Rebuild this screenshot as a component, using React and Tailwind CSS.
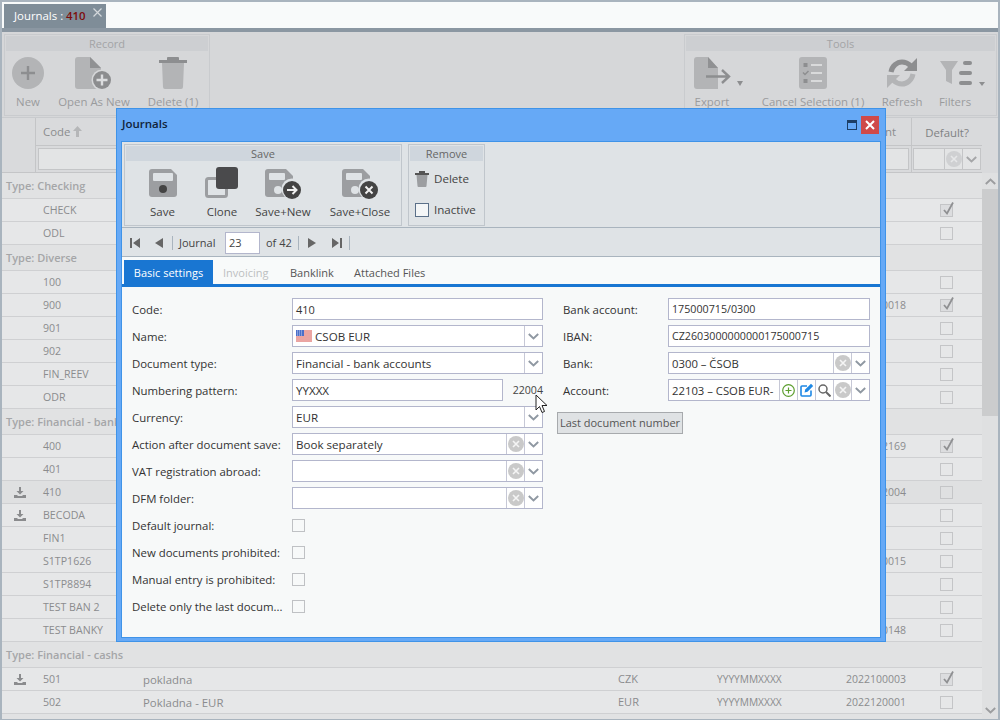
import React from "react";

const F = { fontFamily: '"Open Sans", "Noto Sans", sans-serif' };

function Chevron({ c = "#8f98a2", up }) {
  return (
    <svg width="11" height="7" viewBox="0 0 11 7" className={up ? "rotate-180" : ""}>
      <path d="M0.800 1l4.700 4.500L10.200 1" fill="none" stroke={c} strokeWidth="1.900" />
    </svg>
  );
}
function Clear({ bg = "#c9c9c9", fg = "#f4f4f4" }) {
  return (
    <svg width="16" height="16" viewBox="0 0 16 16">
      <circle cx="8" cy="8" r="8" fill={bg} />
      <path d="M5 5l6 6M11 5l-6 6" stroke={fg} strokeWidth="1.600" />
    </svg>
  );
}
function Check() {
  return (
    <span className="relative block w-[13px] h-[13px] border border-[#c4c5c7] bg-[#dcdddf]">
      <svg className="absolute left-[1px] -top-[4px]" width="14" height="16" viewBox="0 0 14 16">
        <path d="M2 9l3 3.500L11 1.500" fill="none" stroke="#8f9092" strokeWidth="1.800" />
      </svg>
    </span>
  );
}
function Box({ light }) {
  return <span className={"block w-[13px] h-[13px] border " + (light ? "border-[#bfc1c4] bg-[#f7f9f9]" : "border-[#c4c5c7]")} />;
}
function DlIcon() {
  return (
    <svg width="12" height="11" viewBox="0 0 12 11">
      <path d="M5 0h2v4h2.500L6 7.500 2.500 4H5z" fill="#8a8b8d" />
      <path d="M0 8h3l1 1h4l1-1h3v3H0z" fill="#8a8b8d" />
    </svg>
  );
}

const rows = [
  ["g", "Type: Checking"],
  ["r", "CHECK", "", "", "", "", true],
  ["r", "ODL", "", "", "", "", false],
  ["g", "Type: Diverse"],
  ["r", "100", "", "", "", "", false],
  ["r", "900", "", "", "", "2022100018", true],
  ["r", "901", "", "", "", "", false],
  ["r", "902", "", "", "", "", false],
  ["r", "FIN_REEV", "", "", "", "", false],
  ["r", "ODR", "", "", "", "", false],
  ["g", "Type: Financial - bank accounts"],
  ["r", "400", "", "", "", "2022102169", true],
  ["r", "401", "", "", "", "", false],
  ["r", "410", "", "", "", "2022122004", false, true, true],
  ["r", "BECODA", "", "", "", "", false, true],
  ["r", "FIN1", "", "", "", "", false],
  ["r", "S1TP1626", "", "", "", "2022100015", false],
  ["r", "S1TP8894", "", "", "", "", false],
  ["r", "TEST BAN 2", "", "", "", "", false],
  ["r", "TEST BANKY", "", "", "", "2022100148", false],
  ["g", "Type: Financial - cashs"],
  ["r", "501", "pokladna", "CZK", "YYYYMMXXXX", "2022100003", true, true],
  ["r", "502", "Pokladna - EUR", "EUR", "YYYYMMXXXX", "2022120001", false],
];

function GridRow({ r }) {
  if (r[0] === "g") {
    return (
      <div className="h-[26px] pl-[4px] pt-[2px] flex items-center border-b border-[#cfd0d2] bg-[#e1e2e3] text-[11px] font-semibold text-[#a5a6a8]">
        {r[1]}
      </div>
    );
  }
  const [, code, name, cur, pat, num, chk, dl, sel] = r;
  return (
    <div className={"h-[23px] flex items-center border-b border-[#cfd0d2] text-[#8b8c8e] " + (sel ? "bg-[#dfe0e1]" : "bg-[#e6e7e8]")}>
      <span className="w-[34px] flex justify-center pl-[2px]">{dl && <DlIcon />}</span>
      <span className="w-[107px] pl-[7px] text-[10.6px] pt-px">{code}</span>
      <span className="w-[475px] text-[11.4px] pt-px">{name}</span>
      <span className="w-[99px] text-[11px] pt-px">{cur}</span>
      <span className="w-[129px] text-[10.2px] pt-px">{pat}</span>
      <span className="w-[65px] text-[10.5px] pt-px whitespace-nowrap">{num}</span>
      <span className="w-[71px] flex justify-center">{chk ? <Check /> : <Box />}</span>
    </div>
  );
}

function BgBtn({ w, label, icon = "", children }) {
  return (
    <div className={"flex flex-col items-center " + w}>
      <div className={"h-[32px] flex items-center justify-center " + icon}>{children}</div>
      <span className="mt-[4px] text-[11.4px] leading-[18px] text-[#9a9b9d] whitespace-nowrap">{label}</span>
    </div>
  );
}

function GroupHead({ children, cls }) {
  return <div className={"h-[15px] leading-[15px] text-center text-[11px] " + cls}>{children}</div>;
}

function MBtn({ w, label, children }) {
  return (
    <div className={"flex flex-col items-center " + w}>
      <div className="h-[32px] w-full flex items-end justify-center">{children}</div>
      <span className="mt-[5px] text-[11.5px] leading-[16px] text-[#444] whitespace-nowrap">{label}</span>
    </div>
  );
}

function Disk({ children }) {
  return (
    <svg width="36" height="30" viewBox="0 0 36 30">
      <path d="M3 0h18l7 7v18a3 3 0 0 1-3 3H3a3 3 0 0 1-3-3V3a3 3 0 0 1 3-3z" fill="#9c9ea1" />
      <rect x="4" y="4" width="16" height="7" rx="1" fill="#dfe3e6" />
      <circle cx="13" cy="21" r="4" fill="#dfe3e6" />
      {children}
    </svg>
  );
}

function Field({ children, cls = "" }) {
  return (
    <div className={"h-[22px] flex items-stretch border border-[#b3b6cc] bg-white text-[#333] " + cls}>{children}</div>
  );
}
function Txt({ children, s = "text-[11.6px]" }) {
  return <span className={"flex-1 min-w-0 pl-[3px] leading-[21px] whitespace-nowrap overflow-hidden " + s}>{children}</span>;
}
function Btn({ children }) {
  return <span className="w-[18px] shrink-0 border-l border-[#c6c8d6] flex items-center justify-center">{children}</span>;
}
function Label({ children }) {
  return <span className="h-[22px] leading-[23px] whitespace-nowrap text-[11.4px] text-[#333]">{children}</span>;
}

function Flag() {
  return (
    <svg className="mr-[3px] shrink-0" width="16" height="12" viewBox="0 0 16 12">
      <rect width="16" height="12" fill="#f5f5f5" />
      <path d="M0 1h16M0 3h16M0 5h16M0 7h16M0 9h16M0 11h16" stroke="#e0544f" strokeWidth="1" />
      <rect width="8" height="6" fill="#4b6fc9" />
      <path d="M1 1h6M1 3h6M1 5h6" stroke="#dfe6f8" strokeWidth="0.800" strokeDasharray="1 1" />
    </svg>
  );
}

export default function App() {
  return (
    <div style={F} className="relative w-[1000px] h-[720px] overflow-hidden border-2 border-b-[1px] border-[#a9b4be] bg-[#d6d7d9] flex flex-col">
      {/* tab strip */}
      <div className="h-[30px] shrink-0 bg-[#f8fafa] border-b-[4px] border-[#8b97a2] pl-[2px] pt-[2px] flex">
        <div className="relative w-[102px] h-[24px] bg-[#7f8d98] pl-[10px] leading-[23px] text-[11.4px] text-white whitespace-nowrap">
          Journals : <span className="font-semibold text-[#7d0c0c]">410</span>
          <svg className="absolute right-[4px] top-[4px]" width="9" height="9" viewBox="0 0 9 9">
            <path d="M0.500 0.500l8 8M8.500 0.500l-8 8" stroke="#d4d8dc" strokeWidth="1.200" />
          </svg>
        </div>
      </div>

      {/* background toolbars */}
      <div className="h-[86px] shrink-0 flex justify-between pt-[2px] pl-[2px] pr-[1px] border-b border-[#c9cbce]">
        <div className="w-[206px] h-[82px] border border-[#c9cbce] p-px">
          <GroupHead cls="bg-[#cdcfd2] text-[#a3a4a6]">Record</GroupHead>
          <div className="flex pt-[6px]">
            <BgBtn w="w-[44px]" label="New">
              <svg width="32" height="32" viewBox="0 0 32 32">
                <circle cx="16" cy="16" r="16" fill="#b3b4b6" />
                <path d="M16 9v14M9 16h14" stroke="#8d8e90" strokeWidth="2.400" />
              </svg>
            </BgBtn>
            <BgBtn w="w-[88px]" label="Open As New">
              <svg width="38" height="32" viewBox="0 0 38 32">
                <path d="M3 0h11l1 0 11 11v21H3a3 3 0 0 1-3-3V3a3 3 0 0 1 3-3z" fill="#b3b4b6" />
                <path d="M15 0l11 11H15z" fill="#909193" />
                <circle cx="27" cy="23" r="10.500" fill="#d6d7d9" />
                <circle cx="27" cy="23" r="9" fill="#8c8d8f" />
                <path d="M27 17.500v11M21.500 23h11" stroke="#dcdddf" strokeWidth="2.400" />
              </svg>
            </BgBtn>
            <BgBtn w="w-[70px]" label="Delete (1)">
              <svg width="28" height="32" viewBox="0 0 28 32">
                <path d="M0 3h28v3H0zM8 1c0-.500.500-1 1-1h10c.500 0 1 .500 1 1v2H8z" fill="#8d8e90" />
                <path d="M3 6h22l-1 24a2 2 0 0 1-2 2H6a2 2 0 0 1-2-2z" fill="#b3b4b6" />
              </svg>
            </BgBtn>
          </div>
        </div>
        <div className="w-[313px] h-[82px] border border-[#c9cbce] p-px">
          <GroupHead cls="bg-[#cdcfd2] text-[#a3a4a6]">Tools</GroupHead>
          <div className="flex pt-[6px]">
            <BgBtn w="w-[52px]" icon="pl-[13px]" label="Export">
              <svg width="49" height="32" viewBox="0 0 49 32" className="shrink-0">
                <path d="M3 0h11l10 11v21H3a3 3 0 0 1-3-3V3a3 3 0 0 1 3-3z" fill="#b3b4b6" />
                <path d="M14 0l10 11H14z" fill="#909193" />
                <path d="M12 19.500h23M28 13l7 6.500-7 6.500" fill="none" stroke="#8d8e90" strokeWidth="2.400" />
                <path d="M43 24h6l-3 5z" fill="#8d8e90" />
              </svg>
            </BgBtn>
            <BgBtn w="w-[150px]" label="Cancel Selection (1)">
              <svg width="28" height="32" viewBox="0 0 28 32">
                <rect width="28" height="32" rx="3" fill="#b3b4b6" />
                <path d="M12 8h11M12 16h11M12 24h11" stroke="#d9dadb" strokeWidth="2" />
                <rect x="4.500" y="6" width="4" height="4" fill="#8d8e90" />
                <path d="M4 15.500l2 2 3.500-3.500" fill="none" stroke="#8d8e90" strokeWidth="1.500" />
                <rect x="4.500" y="22" width="4" height="4" fill="#8d8e90" />
              </svg>
            </BgBtn>
            <BgBtn w="w-[28px]" label="Refresh">
              <svg width="32" height="32" viewBox="0 0 32 32" className="shrink-0">
                <path d="M27 17C26 23 21 27 16 27C12 27 9 25 7 23" fill="none" stroke="#b3b4b6" strokeWidth="5" />
                <path d="M1 31V18H14z" fill="#b3b4b6" />
                <path d="M5 15C6 9 11 5 16 5C20 5 23 7 25 9" fill="none" stroke="#8d8e90" strokeWidth="5" />
                <path d="M31 1V14H18z" fill="#8d8e90" />
              </svg>
            </BgBtn>
            <BgBtn w="w-[78px]" icon="pl-[15px]" label="Filters">
              <svg width="45" height="32" viewBox="0 0 45 32" className="shrink-0">
                <path d="M0 4h18l-6 9v14l-6-3V13z" fill="#b3b4b6" />
                <rect x="23" y="4" width="9" height="4" rx="2" fill="#8d8e90" />
                <rect x="19" y="14" width="13" height="4" rx="2" fill="#8d8e90" />
                <rect x="19" y="24" width="13" height="4" rx="2" fill="#8d8e90" />
                <path d="M39 25h6l-3 4z" fill="#8d8e90" />
              </svg>
            </BgBtn>
          </div>
        </div>
      </div>

      {/* background grid */}
      <div className="flex-1 min-h-0 flex flex-col bg-[#e1e2e3]">
        <div className="h-[55px] shrink-0 flex text-[11.4px] text-[#8b8c8e] bg-[#d9dadc]">
          <div className="w-[34px] border-r border-b border-[#c4c5c7]" />
          <div className="w-[946px] flex flex-col border-b border-[#c4c5c7]">
            <div className="h-[28px] flex border-b border-[#c4c5c7]">
              <span className="w-[875px] pl-[7px] flex items-center gap-[3px] leading-[30px]">
                Code
                <svg width="9" height="11" viewBox="0 0 9 11"><path d="M4.500 0L9 5H6v6H3V5H0z" fill="#b5b6b8" /></svg>
                <span className="ml-auto pr-[15px]">Last Document</span>
              </span>
              <span className="w-[71px] border-l border-[#c4c5c7] text-center leading-[30px] text-[#808183]">Default?</span>
            </div>
            <div className="flex-1 flex items-start">
              <div className="w-[875px] px-[2px] pt-[2px]">
                <span className="block w-[871px] h-[22px] border border-[#c4c5c7] bg-[#e3e4e5]" />
              </div>
              <div className="w-[71px] h-full border-l border-[#c4c5c7] pl-px pt-[2px]">
                <span className="w-[68px] h-[22px] border border-[#c4c5c7] bg-[#e3e4e5] flex justify-end">
                  <span className="w-[18px] border-l border-[#c4c5c7] flex items-center justify-center"><Clear bg="#cfd0d2" fg="#e6e7e8" /></span>
                  <span className="w-[18px] border-l border-[#c4c5c7] flex items-center justify-center"><Chevron c="#a5a6a8" /></span>
                </span>
              </div>
            </div>
          </div>
          <div className="w-[16px]" />
        </div>
        <div className="flex-1 min-h-0 flex">
          <div className="w-[980px] shrink-0">
            {rows.map((r, i) => (
              <GridRow key={i} r={r} />
            ))}
          </div>
          <div className="w-[16px] bg-[#dfe0e1] flex flex-col">
            <div className="h-[16px] flex items-center justify-center"><Chevron up c="#9c9d9f" /></div>
            <div className="h-[227px] bg-[#cbcccd]" />
            <div className="flex-1" />
            <div className="h-[17px] flex items-center justify-center"><Chevron c="#9c9d9f" /></div>
          </div>
        </div>
      </div>

      {/* modal */}
      <div className="absolute left-[114px] top-[106px] w-[770px] h-[534px] border border-[#3f93e8] bg-[#66a9f6] flex flex-col text-[12px]">
        <div className="h-[32px] shrink-0 flex items-center pl-[5px] pr-[6px]">
          <span className="font-semibold text-[11.5px] text-[#10233a] pb-[2px]">Journals</span>
          <span className="ml-auto mr-[4px] w-[10px] h-[10px] border border-[#1d3f66] border-t-[3px]" />
          <span className="w-[18px] h-[18px] bg-[#cf4a4a] flex items-center justify-center">
            <svg width="10" height="10" viewBox="0 0 10 10"><path d="M1 1l8 8M9 1l-8 8" stroke="#fff" strokeWidth="2" /></svg>
          </span>
        </div>
        <div className="flex-1 min-h-0 mx-[4px] mb-[3px] border border-[#3f93e8] bg-[#f7f9f9] flex flex-col">
          {/* modal toolbar */}
          <div className="h-[86px] shrink-0 bg-[#dfe3e6] border-b border-[#a9b4be] pl-[2px] pt-[2px] flex gap-[6px]">
            <div className="w-[278px] h-[82px] border border-[#c0c6cc] p-px">
              <GroupHead cls="bg-[#cfd6dd] text-[#666]">Save</GroupHead>
              <div className="flex pt-[6px]">
                <MBtn w="w-[73px]" label="Save">
                  <svg width="28" height="30" viewBox="0 0 28 30">
                    <path d="M3 0h19l6 6v19a3 3 0 0 1-3 3H3a3 3 0 0 1-3-3V3a3 3 0 0 1 3-3z" fill="#9c9ea1" />
                    <rect x="4" y="4" width="20" height="8" rx="1" fill="#dfe3e6" />
                    <circle cx="14" cy="20" r="4" fill="#444" />
                  </svg>
                </MBtn>
                <MBtn w="w-[46px]" label="Clone">
                  <svg width="34" height="32" viewBox="0 0 34 32">
                    <rect x="1.500" y="11.500" width="20" height="18" rx="2" fill="none" stroke="#9c9ea1" strokeWidth="3" />
                    <rect x="11" y="0" width="22" height="22" rx="3" fill="#4a4a4c" />
                  </svg>
                </MBtn>
                <MBtn w="w-[76px]" label="Save+New">
                  <Disk>
                    <circle cx="27" cy="20" r="10.500" fill="#dfe3e6" />
                    <circle cx="27" cy="21" r="9" fill="#444" />
                    <path d="M22 21h9M27.500 17l4 4-4 4" fill="none" stroke="#f0f0f0" strokeWidth="2" />
                  </Disk>
                </MBtn>
                <MBtn w="w-[78px]" label="Save+Close">
                  <Disk>
                    <circle cx="27" cy="20" r="10.500" fill="#dfe3e6" />
                    <circle cx="27" cy="21" r="9" fill="#444" />
                    <path d="M23.500 17.500l7 7M30.500 17.500l-7 7" fill="none" stroke="#f0f0f0" strokeWidth="2" />
                  </Disk>
                </MBtn>
              </div>
            </div>
            <div className="w-[77px] h-[82px] border border-[#c0c6cc] p-px">
              <GroupHead cls="bg-[#cfd6dd] text-[#666]">Remove</GroupHead>
              <div className="pl-[5px] text-[11.6px] text-[#444]">
                <div className="h-[23px] mt-[6px] flex items-center gap-[5px]">
                  <svg width="14" height="16" viewBox="0 0 14 16">
                    <path d="M0 2h14v2H0zM4 0h6v2H4z" fill="#555" />
                    <path d="M1.500 4h11l-1 11a1 1 0 0 1-1 1h-7a1 1 0 0 1-1-1z" fill="#9c9ea1" />
                  </svg>
                  Delete
                </div>
                <div className="h-[23px] mt-[8px] flex items-center gap-[5px]">
                  <span className="w-[14px] h-[14px] border border-[#5b7089] bg-[#f4f6f7]" />
                  Inactive
                </div>
              </div>
            </div>
          </div>

          {/* nav */}
          <div className="h-[29px] shrink-0 bg-[#dfe3e6] border-b border-[#a9b4be] pl-[8px] pt-[2px] flex items-center text-[11px] text-[#444]">
            <svg width="10" height="10" viewBox="0 0 10 10" className="mr-[15px]"><path d="M0 0h2v10H0zM10 0v10L3 5z" fill="#666" /></svg>
            <svg width="8" height="10" viewBox="0 0 8 10" className="mr-[9px]"><path d="M8 0v10L0 5z" fill="#666" /></svg>
            <span className="w-px h-[14px] bg-[#a9b4be] mr-[6px]" />
            <span className="w-[46px]">Journal</span>
            <span className="w-[35px] h-[22px] border border-[#b3b6cc] bg-white pl-[3px] leading-[20px] mr-[6px]">23</span>
            <span className="w-[32px]">of 42</span>
            <span className="w-px h-[14px] bg-[#a9b4be] mr-[9px]" />
            <svg width="8" height="10" viewBox="0 0 8 10" className="mr-[16px]"><path d="M0 0v10l8-5z" fill="#666" /></svg>
            <svg width="10" height="10" viewBox="0 0 10 10" className="mr-[7px]"><path d="M8 0h2v10H8zM0 0v10l7-5z" fill="#666" /></svg>
            <span className="w-px h-[14px] bg-[#a9b4be]" />
          </div>

          {/* tabs */}
          <div className="h-[30px] shrink-0 bg-[#f8fafa] border-b-[3px] border-[#1976d2] pt-[3px] pl-[2px] flex items-stretch text-[11px]">
            <span className="w-[89px] bg-[#1976d2] text-white text-center leading-[25px]">Basic settings</span>
            <span className="ml-[10px] w-[67px] text-[#bdbfc1] leading-[25px]">Invoicing</span>
            <span className="w-[64px] text-[#555] leading-[25px]">Banklink</span>
            <span className="text-[#555] leading-[25px]">Attached Files</span>
          </div>

          {/* form */}
          <div className="flex-1 pl-[10px] pt-[11px] flex gap-[20px]">
            <div className="w-[411px] grid grid-cols-[160px_251px] gap-y-[5px] auto-rows-[22px]">
              <Label>Code:</Label>
              <Field><Txt s="text-[11px]">410</Txt></Field>
              <Label>Name:</Label>
              <Field>
                <Txt><span className="flex items-center h-full"><Flag />CSOB EUR</span></Txt>
                <Btn><Chevron /></Btn>
              </Field>
              <Label>Document type:</Label>
              <Field><Txt>Financial - bank accounts</Txt><Btn><Chevron /></Btn></Field>
              <Label>Numbering pattern:</Label>
              <div className="flex items-center">
                <Field cls="w-[211px]"><Txt>YYXXX</Txt></Field>
                <span className="ml-auto text-[10.6px] text-[#444] pt-px">22004</span>
              </div>
              <Label>Currency:</Label>
              <Field><Txt>EUR</Txt><Btn><Chevron /></Btn></Field>
              <Label>Action after document save:</Label>
              <Field><Txt>Book separately</Txt><Btn><Clear /></Btn><Btn><Chevron /></Btn></Field>
              <Label>VAT registration abroad:</Label>
              <Field><Txt /><Btn><Clear /></Btn><Btn><Chevron /></Btn></Field>
              <Label>DFM folder:</Label>
              <Field><Txt /><Btn><Clear /></Btn><Btn><Chevron /></Btn></Field>
              <Label>Default journal:</Label>
              <div className="flex items-center"><Box light /></div>
              <Label>New documents prohibited:</Label>
              <div className="flex items-center"><Box light /></div>
              <Label>Manual entry is prohibited:</Label>
              <div className="flex items-center"><Box light /></div>
              <Label>Delete only the last docum...</Label>
              <div className="flex items-center"><Box light /></div>
            </div>
            <div className="w-[307px] grid grid-cols-[105px_202px] gap-y-[5px] auto-rows-[22px]">
              <Label>Bank account:</Label>
              <Field><Txt s="text-[10.7px]">175000715/0300</Txt></Field>
              <Label>IBAN:</Label>
              <Field><Txt s="text-[10.7px]">CZ2603000000000175000715</Txt></Field>
              <Label>Bank:</Label>
              <Field><Txt s="text-[11.3px]">0300 – ČSOB</Txt><Btn><Clear /></Btn><Btn><Chevron /></Btn></Field>
              <Label>Account:</Label>
              <Field>
                <Txt s="text-[11.3px]">22103 – CSOB EUR-</Txt>
                <Btn>
                  <svg width="13" height="13" viewBox="0 0 13 13"><circle cx="6.500" cy="6.500" r="5.800" fill="none" stroke="#5c9e2e" strokeWidth="1.200" /><path d="M6.500 3.500v6M3.500 6.500h6" stroke="#5c9e2e" strokeWidth="1.200" /></svg>
                </Btn>
                <Btn>
                  <svg width="14" height="14" viewBox="0 0 14 14"><path d="M11 7.500V12a1 1 0 0 1-1 1H2a1 1 0 0 1-1-1V4a1 1 0 0 1 1-1h5" fill="none" stroke="#1e88e5" strokeWidth="1.600" /><path d="M4.500 9.500l.7-3L11 .8l2.200 2.200L7.500 8.800z" fill="#1e88e5" /></svg>
                </Btn>
                <Btn>
                  <svg width="13" height="13" viewBox="0 0 13 13"><circle cx="5" cy="5" r="4" fill="none" stroke="#666" strokeWidth="1.500" /><path d="M8 8l4.500 4.500" stroke="#666" strokeWidth="2" /></svg>
                </Btn>
                <Btn><Clear /></Btn>
                <Btn><Chevron /></Btn>
              </Field>
            </div>
          </div>
        </div>
      </div>

      {/* tooltip */}
      <div className="absolute left-[555px] top-[410px] w-[126px] h-[22px] bg-[#dfe2e4] border border-[#a7aaad] text-center text-[11px] leading-[20px] text-[#555] whitespace-nowrap">
        Last document number
      </div>

      {/* cursor */}
      <svg className="absolute left-[533px] top-[392px]" width="14" height="21" viewBox="0 0 14 21">
        <path d="M1 1v15l3.500-3.500 2.500 6 2.500-1-2.500-6H12z" fill="#fff" stroke="#222" strokeWidth="1" />
      </svg>
    </div>
  );
}
